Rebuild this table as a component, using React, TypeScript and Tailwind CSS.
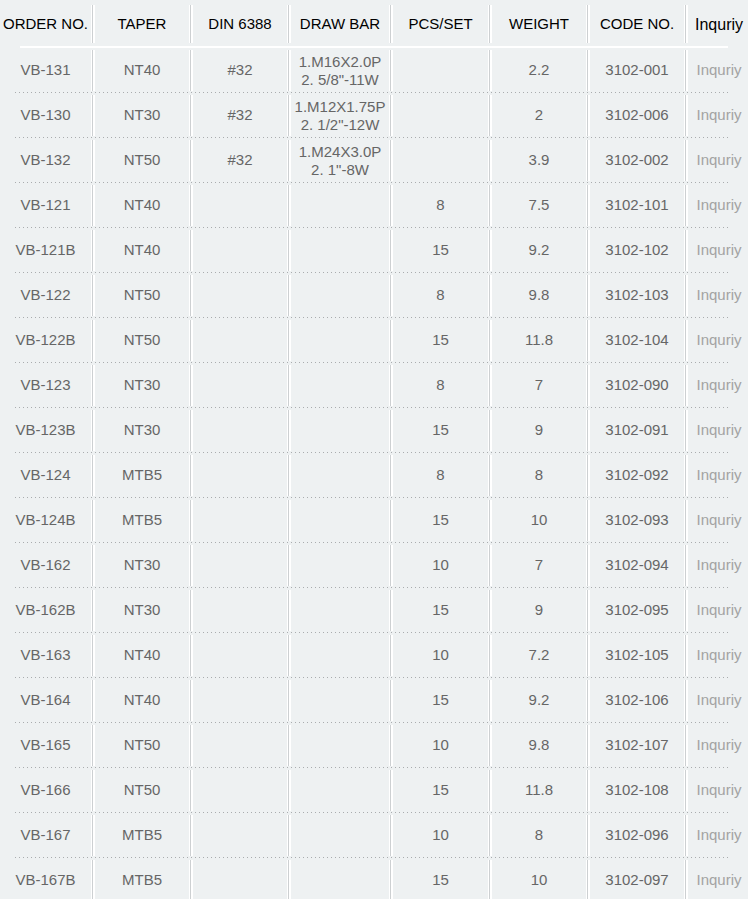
import React from "react";

type RowData = {
  order: string;
  taper: string;
  din: string;
  bar: string[];
  pcs: string;
  weight: string;
  code: string;
};

// widths include the divider at the right of each cell
const COLS = [95, 98, 98, 102, 99, 98, 98, 62];

const HEAD = ["ORDER NO.", "TAPER", "DIN 6388", "DRAW BAR", "PCS/SET", "WEIGHT", "CODE NO."];

const ROWS: RowData[] = [
  { order: "VB-131", taper: "NT40", din: "#32", bar: ["1.M16X2.0P", "2. 5/8\"-11W"], pcs: "", weight: "2.2", code: "3102-001" },
  { order: "VB-130", taper: "NT30", din: "#32", bar: ["1.M12X1.75P", "2. 1/2\"-12W"], pcs: "", weight: "2", code: "3102-006" },
  { order: "VB-132", taper: "NT50", din: "#32", bar: ["1.M24X3.0P", "2. 1\"-8W"], pcs: "", weight: "3.9", code: "3102-002" },
  { order: "VB-121", taper: "NT40", din: "", bar: [], pcs: "8", weight: "7.5", code: "3102-101" },
  { order: "VB-121B", taper: "NT40", din: "", bar: [], pcs: "15", weight: "9.2", code: "3102-102" },
  { order: "VB-122", taper: "NT50", din: "", bar: [], pcs: "8", weight: "9.8", code: "3102-103" },
  { order: "VB-122B", taper: "NT50", din: "", bar: [], pcs: "15", weight: "11.8", code: "3102-104" },
  { order: "VB-123", taper: "NT30", din: "", bar: [], pcs: "8", weight: "7", code: "3102-090" },
  { order: "VB-123B", taper: "NT30", din: "", bar: [], pcs: "15", weight: "9", code: "3102-091" },
  { order: "VB-124", taper: "MTB5", din: "", bar: [], pcs: "8", weight: "8", code: "3102-092" },
  { order: "VB-124B", taper: "MTB5", din: "", bar: [], pcs: "15", weight: "10", code: "3102-093" },
  { order: "VB-162", taper: "NT30", din: "", bar: [], pcs: "10", weight: "7", code: "3102-094" },
  { order: "VB-162B", taper: "NT30", din: "", bar: [], pcs: "15", weight: "9", code: "3102-095" },
  { order: "VB-163", taper: "NT40", din: "", bar: [], pcs: "10", weight: "7.2", code: "3102-105" },
  { order: "VB-164", taper: "NT40", din: "", bar: [], pcs: "15", weight: "9.2", code: "3102-106" },
  { order: "VB-165", taper: "NT50", din: "", bar: [], pcs: "10", weight: "9.8", code: "3102-107" },
  { order: "VB-166", taper: "NT50", din: "", bar: [], pcs: "15", weight: "11.8", code: "3102-108" },
  { order: "VB-167", taper: "MTB5", din: "", bar: [], pcs: "10", weight: "8", code: "3102-096" },
  { order: "VB-167B", taper: "MTB5", din: "", bar: [], pcs: "15", weight: "10", code: "3102-097" },
];

function Cell({
  width,
  header,
  last,
  children,
}: {
  width: number;
  header?: boolean;
  last?: boolean;
  children?: React.ReactNode;
}) {
  return (
    <div className="flex shrink-0" style={{ width }}>
      <div
        className={
          "flex flex-1 items-center justify-center text-center " + (header ? "pt-[3px]" : "pt-px")
        }
      >
        {children}
      </div>
      {!last && (
        <div
          className={
            "w-[4px] border-l border-r-2 border-white bg-[#cdd0d2] " +
            (header ? "mt-[5px] mb-[3px]" : "mt-[2px] mb-[1px]")
          }
        />
      )}
    </div>
  );
}

export default function App() {
  return (
    <div className="min-h-screen w-[748px] overflow-hidden bg-[#eef1f2] font-['Liberation_Sans',Arial,sans-serif]">
      <div className="w-[750px]">
        {/* header */}
        <div className="flex h-[46px] text-[15px] text-black">
          {HEAD.map((h, i) => (
            <Cell key={h} width={COLS[i]} header>
              <span className="whitespace-nowrap">{h}</span>
            </Cell>
          ))}
          <Cell width={COLS[7]} header last>
            <span className="text-[16px]">Inquriy</span>
          </Cell>
        </div>
        <div className="ml-[20px] h-[2px] w-[708px] bg-white" />

        {ROWS.map((r) => (
          <div key={r.order}>
            <div className="flex h-[44px] text-[15px] text-[#666]">
              <Cell width={COLS[0]}>{r.order}</Cell>
              <Cell width={COLS[1]}>{r.taper}</Cell>
              <Cell width={COLS[2]}>{r.din}</Cell>
              <Cell width={COLS[3]}>
                {r.bar.length > 0 && (
                  <div className="whitespace-nowrap leading-[18px]">
                    {r.bar.map((b) => (
                      <div key={b}>{b}</div>
                    ))}
                  </div>
                )}
              </Cell>
              <Cell width={COLS[4]}>{r.pcs}</Cell>
              <Cell width={COLS[5]}>{r.weight}</Cell>
              <Cell width={COLS[6]}>{r.code}</Cell>
              <Cell width={COLS[7]} last>
                <span className="text-[#a3a3a3]">Inquriy</span>
              </Cell>
            </div>
            <div className="ml-[15px] h-px w-[713px] bg-[linear-gradient(to_right,#a9acae_1px,transparent_1px)] bg-[length:4px_1px]" />
          </div>
        ))}
      </div>
    </div>
  );
}
